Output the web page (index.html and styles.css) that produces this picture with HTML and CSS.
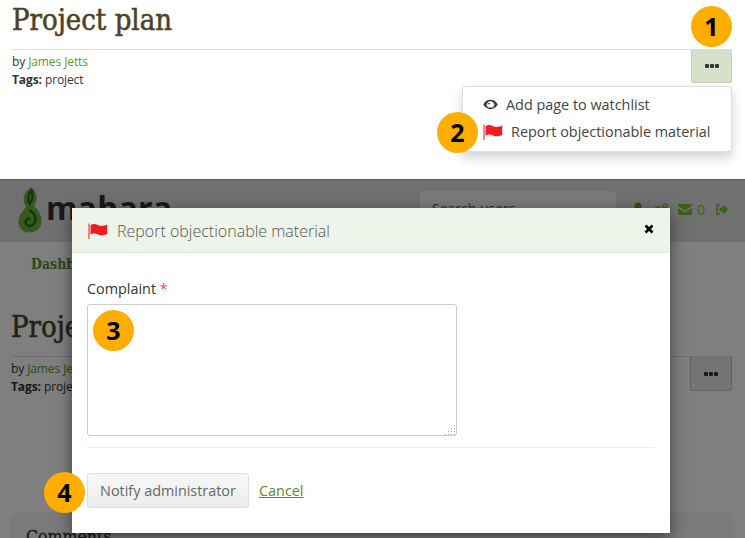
FILE: index.html
```html
<!DOCTYPE html>
<html lang="en">
<head>
<meta charset="utf-8">
<title>Report objectionable material</title>
<link rel="stylesheet" href="styles.css">
</head>
<body>
<svg class="defs" width="0" height="0" aria-hidden="true">
  <symbol id="flag" viewBox="0 0 20 16">
    <path d="M1 0.5V16" fill="none" stroke="#f0555f" stroke-width="1.4"/>
    <path d="M2.5 2.2C5 .6 7.500 .8 10 2.200C12.500 3.400 15.500 3.200 19.500 1.500C19 4.500 19 7.500 19.500 11C15.500 12.700 12.500 12.700 10 11.500C7.500 10.300 5 10.300 2.500 11.500Z" fill="#f01c24"/>
  </symbol>
</svg>

<section class="crop crop-top">
  <h1 class="title">Project plan</h1>
  <div class="meta">
    <div class="meta-text">
      <div>by <a class="link" href="#">James Jetts</a></div>
      <div><strong>Tags:</strong> project</div>
    </div>
    <button class="more more-active" type="button"><span></span><span></span><span></span></button>
  </div>
  <ul class="menu">
    <li class="menu-item">
      <svg class="eye" viewBox="0 0 16 11"><path d="M8 .5C4.500 .5 1.800 2.700 .3 5.500 1.800 8.300 4.500 10.500 8 10.500S14.200 8.300 15.700 5.500C14.200 2.700 11.500 .5 8 .5ZM8 9.300A4 4 0 0 1 4.300 3 4 4 0 1 0 11.700 3 4 4 0 0 1 8 9.300ZM8 9A3.500 3.500 0 0 0 11.500 5.500 3.500 3.500 0 0 0 8 2 3.500 3.500 0 0 0 4.500 5.500 3.500 3.500 0 0 0 8 9ZM6.500 3.500A1 1 0 1 1 6.500 5.500 1 1 0 0 1 6.500 3.500Z" fill="#333" fill-rule="evenodd"/></svg>
      Add page to watchlist
    </li>
    <li class="menu-item menu-item-flag">
      <svg class="flag"><use href="#flag"/></svg>
      Report objectionable material
    </li>
  </ul>
  <span class="badge badge-1">1</span>
  <span class="badge badge-2">2</span>
</section>

<section class="crop crop-bottom">
  <header class="site-header">
    <div class="logo">
      <svg class="logo-mark" viewBox="0 0 24 46">
        <path d="M13 .5C17 3 19.500 8 18.500 13C18 15.500 16.500 17.500 16 19C20 23 24 28 23.500 35C23 41.500 17.500 45.500 11 45.500C5 45.500 .5 41 .5 35C.5 28 6 23.500 8 19.500C6 16 5 12.500 6 9C7 5 10 2 13 .5Z" fill="#68b53a"/>
        <path d="M13.500 3C15.500 7 15 12 11.500 17C9.500 13 9.500 8 13.500 3ZM11.500 23C16.500 26 19 31 16.500 36C13.500 41 7 39 7.500 34.500C8 32 10 31 12 32" fill="none" stroke="#2f6d1a" stroke-width="2.400"/>
      </svg>
      <span class="logo-word">mahara</span>
    </div>
    <div class="search">Search users</div>
    <div class="tools">
      <svg class="tool-user" viewBox="0 0 8 14"><circle cx="4" cy="4" r="3.500" fill="#5a9a25"/></svg>
      <svg class="tool-gear" viewBox="0 0 16 14"><circle cx="6" cy="8.500" r="3.800" fill="none" stroke="#70b530" stroke-width="2.600" stroke-dasharray="2 .8"/><circle cx="13" cy="3.500" r="2" fill="none" stroke="#70b530" stroke-width="1.500"/></svg>
      <svg class="tool-mail" viewBox="0 0 14 11"><path d="M0 0H14V2L7 6.500 0 2ZM0 4L7 8.500 14 4V11H0Z" fill="#78c030"/></svg>
      <span class="tool-count">0</span>
      <svg class="tool-out" viewBox="0 0 13 11"><path d="M5 1H2V10H5" fill="none" stroke="#78c030" stroke-width="1.500"/><path d="M4.500 3.500H8V.5L13 5.500 8 10.500V7.500H4.500Z" fill="#78c030"/></svg>
    </div>
  </header>
  <nav class="site-nav"><a href="#">Dashboard</a></nav>
  <main class="page">
    <h1 class="title">Project plan</h1>
    <div class="meta">
      <div class="meta-text">
        <div>by <a class="link" href="#">James Jetts</a></div>
        <div><strong>Tags:</strong> project</div>
      </div>
      <button class="more" type="button"><span></span><span></span><span></span></button>
    </div>
    <div class="comments"><h2>Comments</h2></div>
  </main>
  <div class="overlay"></div>
  <div class="modal">
    <div class="modal-head">
      <svg class="flag"><use href="#flag"/></svg>
      <h2>Report objectionable material</h2>
      <svg class="close" viewBox="0 0 10 10"><path d="M1.500 1.500L8.500 8.500M8.500 1.500L1.500 8.500" stroke="#000" stroke-width="2.600"/></svg>
    </div>
    <form class="modal-body">
      <label class="field-label" for="complaint">Complaint <span class="req">*</span></label>
      <div class="complaint-wrap">
        <textarea class="complaint" id="complaint"></textarea>
        <svg class="grip" viewBox="0 0 11 11">
          <path d="M9 1h1v1H9zM9 4h1v1H9zM6 4h1v1H6zM9 7h1v1H9zM6 7h1v1H6zM3 7h1v1H3zM9 10h1v1H9zM6 10h1v1H6zM3 10h1v1H3zM0 10h1v1H0z" fill="#aaa"/>
        </svg>
      </div>
      <hr class="rule">
      <div class="actions">
        <button class="notify" type="button">Notify administrator</button>
        <a class="cancel" href="#">Cancel</a>
      </div>
    </form>
  </div>
  <span class="badge badge-3">3</span>
  <span class="badge badge-4">4</span>
</section>
</body>
</html>
```
FILE: styles.css
```css
* { box-sizing: border-box; }
html, body { margin: 0; height: 538px; overflow: hidden; background: #fff; }
body { font-family: "Open Sans", sans-serif; font-size: 12px; color: #333; }
.defs { position: absolute; }

.crop { position: relative; width: 745px; overflow: hidden; }
.crop-top { height: 180px; padding: 3px 13px 0 12px; border-bottom: 1px solid #5f5f5f; }
.crop-bottom { height: 358px; background: #fff; }

.title {
  margin: 0; height: 47px;
  font-family: "DejaVu Serif", serif; font-stretch: condensed;
  font-size: 29px; line-height: 34px; font-weight: 400;
  color: #4d4225; border-bottom: 1px solid #ddd; -webkit-text-stroke: .55px #4d4225;
}
.meta { display: flex; justify-content: space-between; align-items: flex-start; }
.meta-text { padding-top: 3px; line-height: 18px; letter-spacing: -.1px; color: #333; }
.link { color: #5a9a25; text-decoration: none; }
.more {
  display: flex; gap: 1px; justify-content: center; align-items: center;
  width: 42px; height: 34px; padding: 0;
  background: #e8e8e8; border: 1px solid #c4c4c4; border-top: 0; border-radius: 0 0 3px 3px;
}
.more span { width: 4px; height: 4px; border-radius: 1px; background: #333; }
.more-active { width: 41px; height: 33px; background: #d5e1c9; border-color: #c5d1b9; }

.menu {
  position: absolute; left: 462px; top: 86px; width: 270px; height: 66px;
  margin: 0; padding: 4px 0 0 20px; list-style: none; background: #fff;
  border: 1px solid #ddd; border-radius: 3px; box-shadow: 0 6px 12px rgba(0,0,0,.18);
  font-size: 14.4px; color: #444;
}
.menu-item { display: flex; align-items: center; height: 27px; white-space: nowrap; }
.eye { width: 15px; height: 11px; margin-right: 8px; }
.flag { width: 20px; height: 16px; flex: none; }
.menu-item-flag .flag { margin-right: 8px; }

.badge {
  position: absolute; z-index: 5; width: 41px; height: 41px; border-radius: 50%;
  background: #ffae00; color: #000; text-align: center;
  font-size: 25px; line-height: 41px; font-weight: 700;
}
.badge-1 { left: 691px; top: 6px; }
.badge-2 { left: 437px; top: 112px; }
.badge-3 { left: 93px; top: 130px; }
.badge-4 { left: 44px; top: 292px; }

.site-header {
  position: relative; display: flex; align-items: flex-start; height: 62px;
  background: #e0e0e0;
}
.logo { display: flex; align-items: flex-start; padding: 7px 0 0 18px; width: 419px; }
.logo-mark { width: 24px; height: 46px; flex: none; }
.logo-word { font-weight: 700; font-size: 32px; line-height: 40px; color: #333; margin: 1px 0 0 4px; letter-spacing: .2px; }
.search {
  width: 198px; height: 40px; margin-top: 10px; padding: 8px 12px;
  background: #f4f4f4; border: 1px solid #ddd; border-radius: 4px;
  font-size: 14px; line-height: 20px; color: #555;
}
.tools { display: flex; align-items: center; height: 16px; margin: 21px 0 0 17px; color: #70b530; font-size: 14px; }
.tool-user { width: 8px; height: 14px; margin-right: 11px; }
.tool-gear { width: 15px; height: 14px; margin-right: 10px; }
.tool-mail { width: 14px; height: 11px; margin-right: 5px; }
.tool-count { width: 8px; margin-right: 10px; color: #78c030; }
.tool-out { width: 13px; height: 11px; }

.site-nav { height: 42px; padding: 12px 0 0 31px; background: #fff; }
.site-nav a {
  font-family: "DejaVu Serif", serif; font-stretch: condensed; font-size: 14px; font-weight: 700;
  line-height: 20px; color: #5a8a35; text-decoration: none;
}
.page { padding: 0 13px 0 11px; margin-top: 24px; }
.page .title { height: 49px; line-height: 38px; }
.comments {
  margin-top: 116px; height: 80px; padding: 12px 15px; background: #f4f4f4; border-radius: 10px;
}
.comments h2 { margin: 0; font-family: "DejaVu Serif", serif; font-stretch: condensed; font-weight: 400; font-size: 17.500px; line-height: 24px; color: #333; -webkit-text-stroke: .3px #333; }

.overlay { position: absolute; inset: 0; background: rgba(0,0,0,.5); }

.modal {
  position: absolute; left: 72px; top: 28px; width: 598px; height: 325px;
  background: #fff; box-shadow: 0 5px 15px rgba(0,0,0,.5);
}
.modal-head {
  display: flex; align-items: center; height: 45px; padding: 0 16px 0 16px;
  background: #eef4ea; border-bottom: 1px solid #e2e6df;
}
.modal-head .flag { margin: 2px 9px 0 0; }
.modal-head h2 { flex: 1; margin: 0; padding-top: 2px; font-size: 16px; font-weight: 300; line-height: 22px; color: #555; }
.close { width: 10px; height: 10px; margin-top: -3px; }
.modal-body { display: flex; flex-direction: column; padding: 26px 15px 0; }
.field-label { font-size: 14.4px; line-height: 20px; color: #333; height: 25px; }
.req { color: #e05050; }
.complaint-wrap { position: relative; width: 370px; height: 132px; }
.complaint {
  display: block; width: 100%; height: 100%; margin: 0; resize: none;
  background: #fff; border: 1px solid #ccc; border-radius: 3px;
}
.grip { position: absolute; right: 1px; bottom: 1px; width: 11px; height: 11px; }
.rule { width: 100%; margin: 11px 0 0; border: 0; border-top: 1px solid #eee; }
.actions { display: flex; align-items: center; gap: 10px; margin-top: 25px; }
.notify {
  width: 162px; height: 35px; padding: 0;
  font: 14.4px/20px "Open Sans", sans-serif; color: #666;
  background: linear-gradient(#f7f7f7, #ededed); border: 1px solid #ddd; border-radius: 3px;
}
.cancel { font-size: 14.4px; color: #5a8a25; text-decoration: underline; }
```
